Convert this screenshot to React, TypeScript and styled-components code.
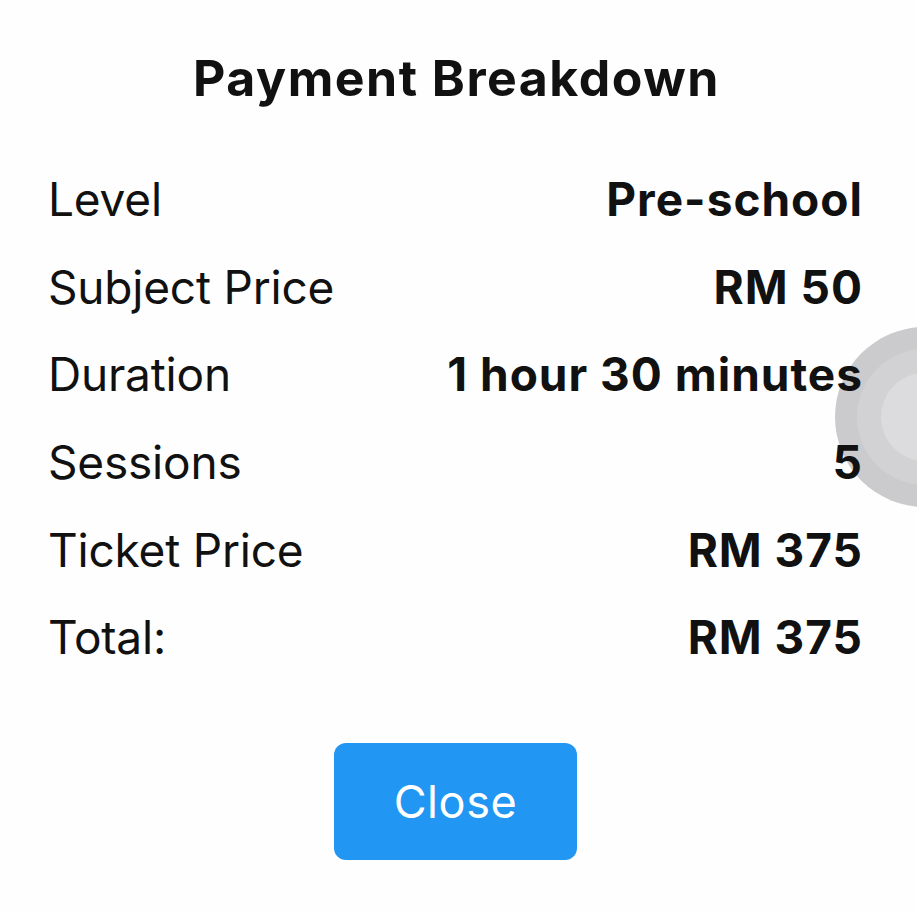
import React from "react";
import styled, { createGlobalStyle } from "styled-components";

const Global = createGlobalStyle`
  html, body { margin: 0; padding: 0; background: #fefefe; }
  body { font-family: Inter, "Noto Sans", "Liberation Sans", sans-serif; color: #111; }
`;

const Page = styled.div`
  position: relative;
  width: 917px;
  height: 913px;
  overflow: hidden;
  background: #fefefe;
  display: flex;
  flex-direction: column;
  align-items: stretch;
`;

const Title = styled.h1`
  margin: 0;
  padding-top: 46px;
  padding-right: 4px;
  font-size: 50px;
  line-height: 64px;
  font-weight: 700;
  text-align: center;
  letter-spacing: 1.5px;
  color: #111;
`;

const Rows = styled.div`
  display: flex;
  flex-direction: column;
  padding: 45.5px 55px 0 48px;
`;

const Row = styled.div`
  display: flex;
  justify-content: space-between;
  align-items: center;
  height: 87.6px;
  position: relative;
  z-index: 1;
`;

const Label = styled.span`
  font-size: 46px;
  font-weight: 400;
  color: #111;
  letter-spacing: -0.2px;
`;

const Value = styled.span`
  font-size: 46px;
  font-weight: 700;
  color: #111;
  letter-spacing: 1px;
  margin-right: -1px;
`;

const Footer = styled.div`
  display: flex;
  justify-content: center;
  padding-top: 61.5px;
  padding-right: 6px;
`;

const CloseButton = styled.button`
  width: 243px;
  height: 117px;
  border: none;
  border-radius: 12px;
  background: #2196f3;
  color: #fff;
  font-family: Inter, "Noto Sans", sans-serif;
  font-size: 45px;
  font-weight: 400;
  letter-spacing: 0.6px;
  cursor: pointer;
`;

const Touch = styled.div`
  position: absolute;
  left: 835px;
  top: 327px;
  width: 180px;
  height: 180px;
  border-radius: 50%;
  background: rgba(160, 160, 164, 0.55);
  display: flex;
  align-items: center;
  justify-content: center;
  z-index: 0;
`;

const Ring = styled.div<{ $size: number; $bg: string }>`
  width: ${(p) => p.$size}px;
  height: ${(p) => p.$size}px;
  border-radius: 50%;
  background: ${(p) => p.$bg};
  display: flex;
  align-items: center;
  justify-content: center;
`;

const rows: [string, string][] = [
  ["Level", "Pre-school"],
  ["Subject Price", "RM 50"],
  ["Duration", "1 hour 30 minutes"],
  ["Sessions", "5"],
  ["Ticket Price", "RM 375"],
  ["Total:", "RM 375"],
];

export default function App() {
  return (
    <Page>
      <Global />
      <Title>Payment Breakdown</Title>
      <Rows>
        {rows.map(([l, v]) => (
          <Row key={l}>
            <Label>{l}</Label>
            <Value>{v}</Value>
          </Row>
        ))}
      </Rows>
      <Footer>
        <CloseButton>Close</CloseButton>
      </Footer>
      <Touch>
        <Ring $size={136} $bg="#d2d2d4">
          <Ring $size={88} $bg="#dcdcde" />
        </Ring>
      </Touch>
    </Page>
  );
}
